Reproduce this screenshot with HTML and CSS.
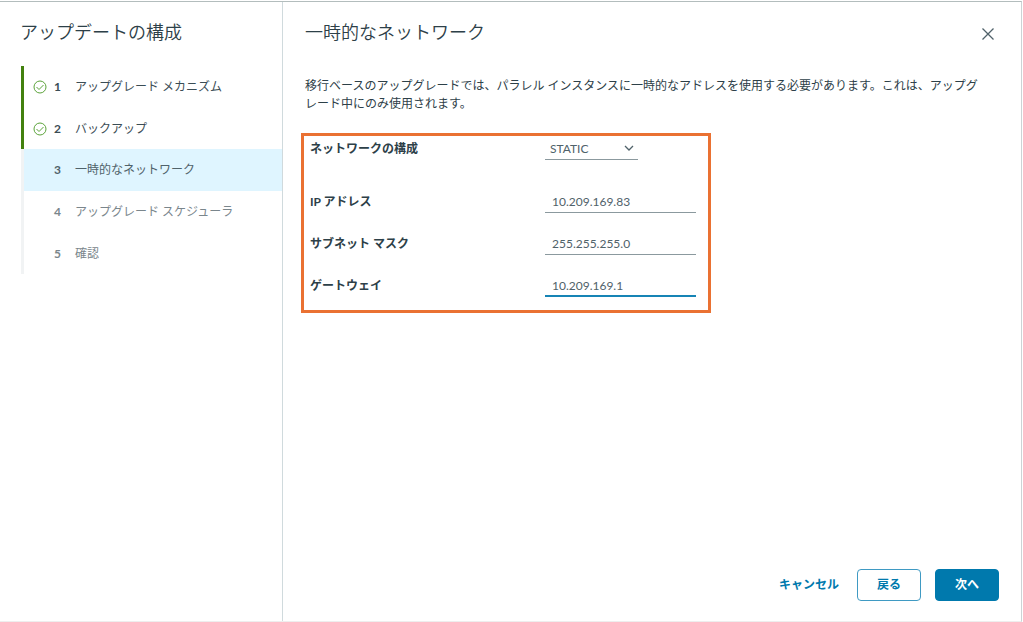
FILE: index.html
```html
<!DOCTYPE html>
<html lang="ja">
<head>
    <meta charset="UTF-8">
    <meta name="viewport" content="width=device-width, initial-scale=1.0">
    <title>アップデートの構成</title>
    <link rel="stylesheet" href="styles.css">
</head>
<body>
    <div class="wizard">
        <nav class="sidebar">
            <h1>アップデートの構成</h1>
            <ol class="steps">
                <li class="step done">
                    <svg class="check" viewBox="0 0 14 14"><circle cx="7" cy="7" r="6"/><path d="M3.5 7l2.5 2.5L10.5 5"/></svg>
                    <span class="number">1</span>
                    <span>アップグレード メカニズム</span>
                </li>
                <li class="step done">
                    <svg class="check" viewBox="0 0 14 14"><circle cx="7" cy="7" r="6"/><path d="M3.5 7l2.5 2.5L10.5 5"/></svg>
                    <span class="number">2</span>
                    <span>バックアップ</span>
                </li>
                <li class="step current" aria-current="step">
                    <span class="number">3</span>
                    <span>一時的なネットワーク</span>
                </li>
                <li class="step">
                    <span class="number">4</span>
                    <span>アップグレード スケジューラ</span>
                </li>
                <li class="step">
                    <span class="number">5</span>
                    <span>確認</span>
                </li>
            </ol>
        </nav>
        <main class="content">
            <header class="content-header">
                <h2>一時的なネットワーク</h2>
                <button type="button" class="close" aria-label="閉じる">
                    <svg viewBox="0 0 12 12"><path d="M.5.5l11 11M11.5.5l-11 11"/></svg>
                </button>
            </header>
            <p class="description">移行ベースのアップグレードでは、パラレル インスタンスに一時的なアドレスを使用する必要があります。これは、アップグレード中にのみ使用されます。</p>
            <form class="network-form" id="networkForm">
                <div class="field mode">
                    <label for="mode">ネットワークの構成</label>
                    <div class="select">
                        <select id="mode" name="mode">
                            <option>STATIC</option>
                            <option>DHCP</option>
                        </select>
                        <svg viewBox="0 0 10 6"><path d="M1 1l4 4 4-4"/></svg>
                    </div>
                </div>
                <div class="field">
                    <label for="ip">IP アドレス</label>
                    <input type="text" id="ip" name="ip" value="10.209.169.83">
                </div>
                <div class="field">
                    <label for="subnet">サブネット マスク</label>
                    <input type="text" id="subnet" name="subnet" value="255.255.255.0">
                </div>
                <div class="field">
                    <label for="gateway">ゲートウェイ</label>
                    <input type="text" id="gateway" name="gateway" class="active" value="10.209.169.1">
                </div>
            </form>
            <footer class="actions">
                <button type="button" class="btn link">キャンセル</button>
                <button type="button" class="btn outline">戻る</button>
                <button type="submit" form="networkForm" class="btn primary">次へ</button>
            </footer>
        </main>
    </div>
</body>
</html>
```
FILE: styles.css
```css
* {
    box-sizing: border-box;
}
body {
    margin: 0;
    padding: 1px 1px 0 0;
    background-color: #fff;
    color: #2d4048;
    font-family: Lato, "Noto Sans CJK JP", sans-serif;
    font-size: 12px;
    line-height: 18px;
}
button, input, select {
    font: inherit;
    color: inherit;
}
h1, h2 {
    margin: 0;
    font-size: 18px;
    font-weight: 350;
    line-height: 24px;
}
.wizard {
    display: flex;
    min-height: calc(100vh - 1px);
    border-top: 1px solid #b3bdbd;
    border-right: 1px solid #ccd3d5;
    border-bottom: 1px solid #eee;
}
.sidebar {
    flex: 0 0 283px;
    padding-top: 18px;
    border-right: 1px solid #d0dadd;
}
.sidebar h1 {
    padding-left: 20px;
}
.steps {
    display: grid;
    grid-auto-rows: 1fr;
    min-height: 208px;
    margin: 22px 0 0 21px;
    padding: 0;
    list-style: none;
}
.step {
    display: flex;
    align-items: center;
    padding: 1px 0 0 30px;
    border-left: 3px solid #f1f3f4;
    color: #7a868c;
}
.step.done {
    padding-left: 9px;
    border-left-color: #42810e;
    color: #3b4d55;
}
.step.current {
    background-color: #dff5ff;
    background-clip: padding-box;
    color: #50626a;
}
.check {
    width: 14px;
    height: 14px;
    margin-right: 7px;
    fill: none;
    stroke: #5ba33a;
}
.number {
    width: 21px;
    font-weight: 700;
}
.content {
    flex: 1;
    display: flex;
    flex-direction: column;
    padding: 18px 22px 20px;
}
.content-header {
    display: flex;
    justify-content: space-between;
}
.close {
    display: flex;
    padding: 8px 5px;
    border: none;
    background: none;
    cursor: pointer;
}
.close svg {
    width: 12px;
    height: 12px;
    fill: none;
    stroke: #50626a;
    stroke-width: 1.3;
}
.description {
    margin: 29px 0 0;
    line-break: strict;
}
.network-form {
    display: flex;
    flex-direction: column;
    gap: 18px;
    max-width: 410px;
    margin: 20px 0 0 -4px;
    padding: 0 12px 13px 6px;
    border: 3px solid #ea7132;
}
.field {
    display: grid;
    grid-template-columns: 235px 1fr;
}
.field.mode {
    margin-bottom: 11px;
}
.field label {
    padding-top: 4px;
    font-weight: 700;
}
.field input,
.field select {
    width: 100%;
    height: 24px;
    border: none;
    border-bottom: 1px solid #8b999e;
    border-radius: 0;
    outline: none;
    background: none;
    color: #50626a;
}
.field input {
    padding: 2px 7px 0;
}
.field input.active {
    border-bottom: 2px solid #1684b5;
}
.select {
    display: grid;
    align-items: center;
    width: 93px;
}
.select select,
.select svg {
    grid-area: 1 / 1;
}
.select select {
    padding: 2px 5px 0;
    appearance: none;
}
.select svg {
    justify-self: end;
    width: 10px;
    height: 6px;
    margin-right: 4px;
    fill: none;
    stroke: #50626a;
    stroke-width: 1.3;
    pointer-events: none;
}
.actions {
    display: flex;
    justify-content: flex-end;
    gap: 14px;
    margin-top: auto;
}
.btn {
    min-width: 64px;
    height: 32px;
    padding: 0 12px;
    border: 1px solid #0079ad;
    border-radius: 4px;
    background: none;
    color: #0079ad;
    font-size: 12px;
    font-weight: 700;
    cursor: pointer;
}
.btn.link {
    padding: 0 4px;
    border: none;
}
.btn.outline {
    border-color: #3f9ac3;
}
.btn.primary {
    background-color: #0079ad;
    color: #fff;
}
```
